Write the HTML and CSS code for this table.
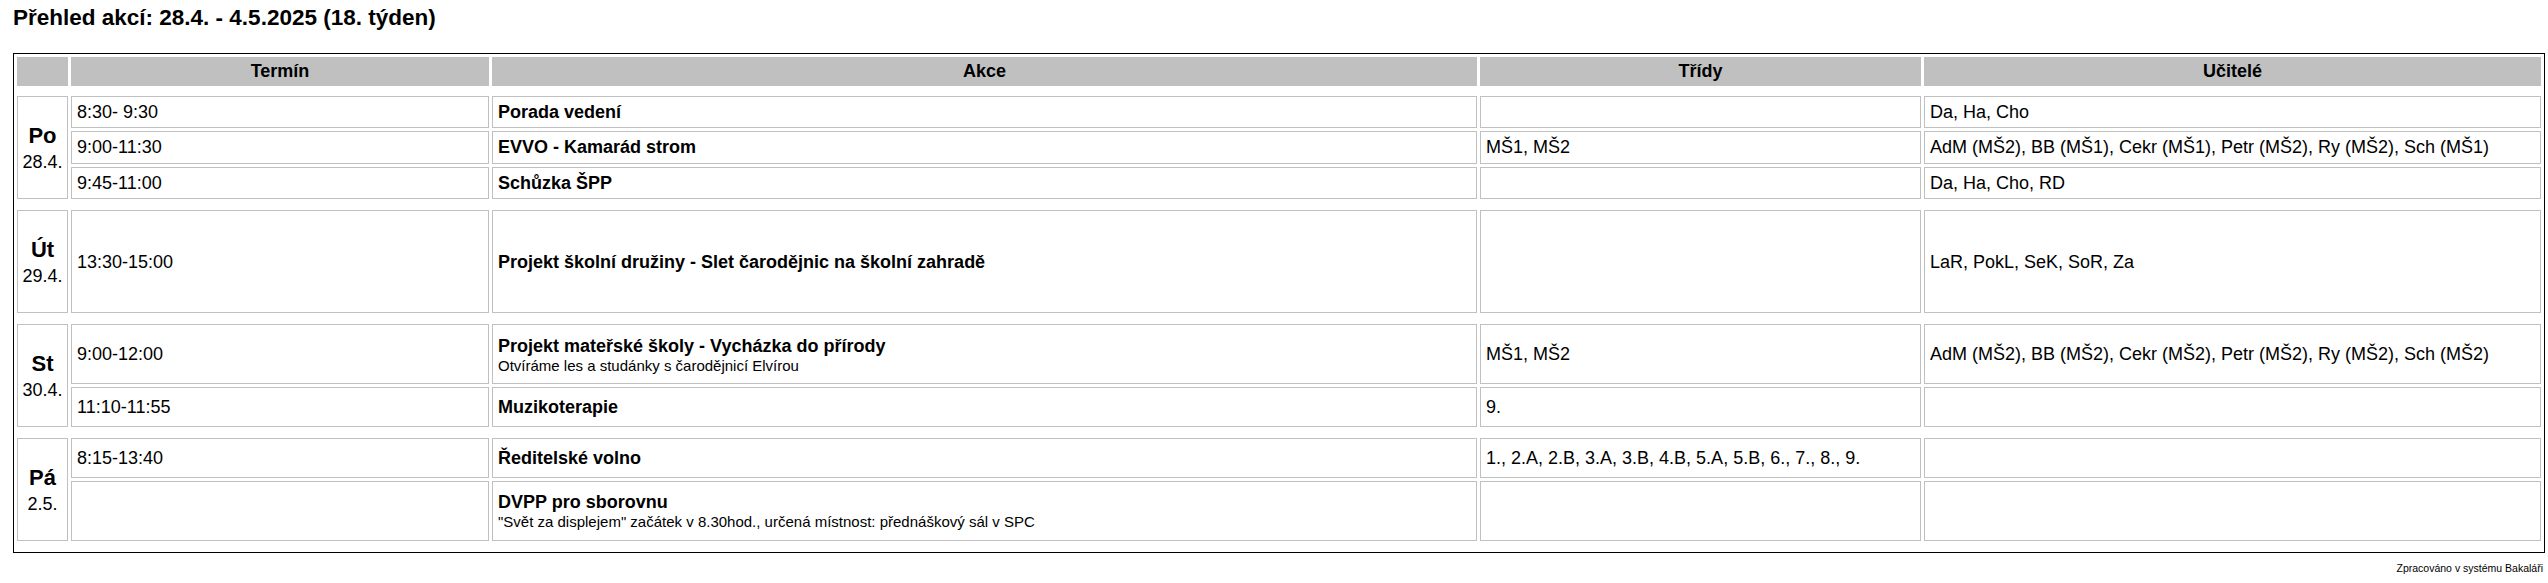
FILE: index.html
```html
<!DOCTYPE html>
<html lang="cs">
<head>
<meta charset="utf-8">
<title>Přehled akcí</title>
<link rel="stylesheet" href="styles.css">
</head>
<body>
<h1 class="title">Přehled akcí: 28.4. - 4.5.2025 (18. týden)</h1>
<table class="plan">
  <thead>
    <tr>
      <th class="c-day"></th>
      <th class="c-time">Termín</th>
      <th class="c-event">Akce</th>
      <th class="c-class">Třídy</th>
      <th class="c-teach">Učitelé</th>
    </tr>
  </thead>
  <tbody>
    <tr class="sep first"><td colspan="5"></td></tr>

    <tr>
      <td class="day" rowspan="3"><b>Po</b><span>28.4.</span></td>
      <td>8:30- 9:30</td>
      <td class="ev"><b>Porada vedení</b></td>
      <td></td>
      <td>Da, Ha, Cho</td>
    </tr>
    <tr>
      <td>9:00-11:30</td>
      <td class="ev"><b>EVVO - Kamarád strom</b></td>
      <td>MŠ1, MŠ2</td>
      <td>AdM (MŠ2), BB (MŠ1), Cekr (MŠ1), Petr (MŠ2), Ry (MŠ2), Sch (MŠ1)</td>
    </tr>
    <tr>
      <td>9:45-11:00</td>
      <td class="ev"><b>Schůzka ŠPP</b></td>
      <td></td>
      <td>Da, Ha, Cho, RD</td>
    </tr>
    <tr class="sep"><td colspan="5"></td></tr>

    <tr>
      <td class="day"><b>Út</b><span>29.4.</span></td>
      <td>13:30-15:00</td>
      <td class="ev"><b>Projekt školní družiny - Slet čarodějnic na školní zahradě</b></td>
      <td></td>
      <td>LaR, PokL, SeK, SoR, Za</td>
    </tr>
    <tr class="sep"><td colspan="5"></td></tr>

    <tr>
      <td class="day" rowspan="2"><b>St</b><span>30.4.</span></td>
      <td>9:00-12:00</td>
      <td class="ev"><b>Projekt mateřské školy - Vycházka do přírody</b><small>Otvíráme les a studánky s čarodějnicí Elvírou</small></td>
      <td>MŠ1, MŠ2</td>
      <td>AdM (MŠ2), BB (MŠ2), Cekr (MŠ2), Petr (MŠ2), Ry (MŠ2), Sch (MŠ2)</td>
    </tr>
    <tr>
      <td>11:10-11:55</td>
      <td class="ev"><b>Muzikoterapie</b></td>
      <td>9.</td>
      <td></td>
    </tr>
    <tr class="sep"><td colspan="5"></td></tr>

    <tr>
      <td class="day" rowspan="2"><b>Pá</b><span>2.5.</span></td>
      <td>8:15-13:40</td>
      <td class="ev"><b>Ředitelské volno</b></td>
      <td>1., 2.A, 2.B, 3.A, 3.B, 4.B, 5.A, 5.B, 6., 7., 8., 9.</td>
      <td></td>
    </tr>
    <tr>
      <td></td>
      <td class="ev"><b>DVPP pro sborovnu</b><small>"Svět za displejem" začátek v 8.30hod., určená místnost: přednáškový sál v SPC</small></td>
      <td></td>
      <td></td>
    </tr>
    <tr class="sep"><td colspan="5"></td></tr>
  </tbody>
</table>
<p class="foot">Zpracováno v systému Bakaláři</p>
</body>
</html>
```

FILE: styles.css
```css
html, body {
  margin: 0;
  padding: 0;
  background: #ffffff;
}

body {
  font-family: "Liberation Sans", Arial, sans-serif;
  color: #000000;
}

.title {
  margin: 0;
  padding: 5px 0 0 13px;
  font-size: 22.5px;
  line-height: 26px;
  font-weight: bold;
}

.plan {
  margin: 22px 0 0 13px;
  width: 2532px;
  box-sizing: border-box;
  table-layout: fixed;
  border-collapse: separate;
  border-spacing: 3px;
  border: 1px solid #000000;
  font-size: 18px;
  line-height: 21px;
}

.plan th {
  box-sizing: border-box;
  background: #c0c0c0;
  border: 1px solid #c0c0c0;
  padding: 3px 5px;
  font-weight: bold;
  text-align: center;
}

.c-day { width: 51px; }
.c-time { width: 418px; }
.c-event { width: 985px; }
.c-class { width: 441px; }
.c-teach { width: 617px; }

.plan td {
  border: 1px solid #c0c0c0;
  padding: 5px 5px 4px;
  vertical-align: middle;
  text-align: left;
}

.plan tr.sep td {
  border: 0;
  padding: 0;
  height: 5px;
}

.plan tr.sep.first td {
  height: 4px;
}

.plan td.day {
  box-sizing: border-box;
  height: 103px;
  padding: 0;
  text-align: center;
}

.day b {
  display: block;
  font-size: 22px;
  line-height: 25px;
  margin-bottom: 4px;
}

.day span {
  display: block;
  font-size: 18px;
  line-height: 21px;
}

.ev b {
  display: block;
}

.ev small {
  display: block;
  font-size: 15px;
  line-height: 17px;
}

.foot {
  margin: 9px 0 0;
  padding: 0 5px 0 0;
  text-align: right;
  font-size: 10.5px;
  line-height: 13px;
}
```
